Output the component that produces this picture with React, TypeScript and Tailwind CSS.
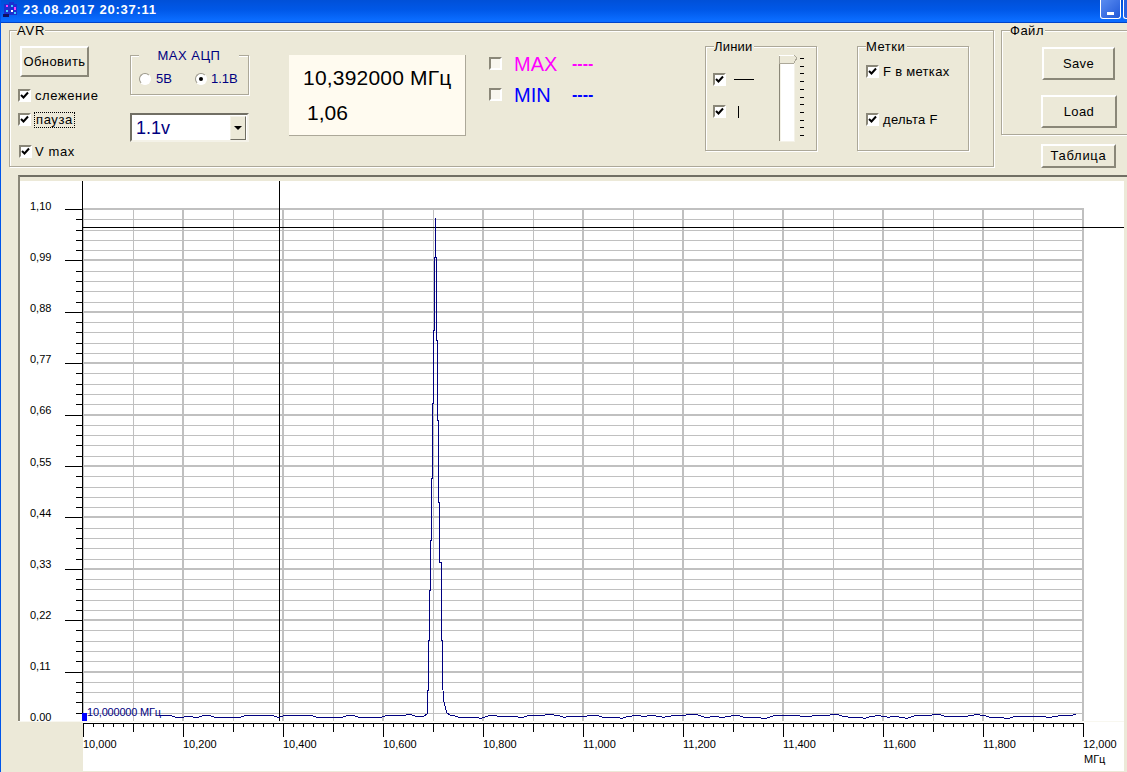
import type { ReactNode } from "react";

/* ── chart data ─────────────────────────────────────── */
const yLabels = ["1,10", "0,99", "0,88", "0,77", "0,66", "0,55", "0,44", "0,33", "0,22", "0,11", "0,00"];
const xLabels = ["10,000", "10,200", "10,400", "10,600", "10,800", "11,000", "11,200", "11,400", "11,600", "11,800", "12,000"];
const GRID_TOP = 209;
const GRID_STEP = 10.28;

const noise = (x: number) =>
  716 - Math.round(Math.sin(x * 0.13) * 0.9 + Math.sin(x * 0.047 + 1) * 0.8 + Math.sin(x * 0.31) * 0.6);

const range = (from: number, to: number, step: number) => {
  const out: number[] = [];
  for (let v = from; v <= to; v += step) out.push(v);
  return out;
};

const peak: [number, number][] = [
  [427, 714], [427.5, 713], [427.5, 690], [428.5, 690], [428.5, 640], [429.5, 640], [429.5, 590], [430.5, 590],
  [430.5, 540], [431.5, 540], [431.5, 478], [432.5, 478], [432.5, 403], [433.5, 403], [433.5, 330], [434.5, 330],
  [434.5, 257], [435.5, 257], [435.5, 218], [435.5, 257], [436.5, 257], [436.5, 340], [437.5, 340], [437.5, 420],
  [438.5, 420], [438.5, 502], [439.5, 502], [439.5, 562], [441.5, 562], [441.5, 640], [442.5, 640], [442.5, 680],
  [443.5, 700], [445, 706], [447, 713], [450, 715],
];

const spectrum = [
  ...range(160, 425, 3).map((x) => [x, noise(x)]),
  ...peak,
  ...range(452, 1078, 3).map((x) => [x, noise(x)]),
]
  .map((p) => p.join(","))
  .join(" ");

/* ── small win32 controls ───────────────────────────── */
function Check({ className = "" }: { className?: string }) {
  return (
    <span className={`flex h-[13px] w-[13px] shrink-0 border-2 border-t-[#8a8778] border-l-[#8a8778] border-r-white border-b-white bg-white ${className}`}>
      <svg viewBox="0 0 9 9" className="h-[9px] w-[9px]">
        <path d="M1 4 L3.5 6.5 L8 1.5" fill="none" stroke="#000" strokeWidth="2" />
      </svg>
    </span>
  );
}

function EmptyCheck() {
  return <span className="block h-[13px] w-[13px] shrink-0 border-2 border-t-[#8a8778] border-l-[#8a8778] border-r-white border-b-white bg-[#f8f6ee]" />;
}

function Radio({ on }: { on?: boolean }) {
  return (
    <span className="flex h-[12px] w-[12px] shrink-0 items-center justify-center rounded-full border border-t-[#9a978a] border-l-[#9a978a] border-r-white border-b-white bg-white">
      {on && <span className="h-[4px] w-[4px] rounded-full bg-black" />}
    </span>
  );
}

function Button({ children, className = "" }: { children: ReactNode; className?: string }) {
  return (
    <div className={`flex items-center justify-center border-2 border-t-white border-l-white border-r-[#8a8778] border-b-[#8a8778] text-[13px] text-black ${className}`}>
      {children}
    </div>
  );
}

function Group({ title, className = "", titleClass = "", children }: { title: string; className?: string; titleClass?: string; children?: ReactNode }) {
  return (
    <div className={`relative shrink-0 border border-[#aca899] shadow-[1px_1px_0_#fff,inset_1px_1px_0_#fff] ${className}`}>
      <span className={`absolute -top-[8px] bg-[#ece9d8] text-[13px] leading-[15px] ${titleClass}`}>{title}</span>
      {children}
    </div>
  );
}

function CheckRow({ label, className = "" }: { label: ReactNode; className?: string }) {
  return (
    <div className={`flex h-[13px] items-center ${className}`}>
      <Check />
      {label}
    </div>
  );
}

/* ── title bar ──────────────────────────────────────── */
function TitleBar() {
  return (
    <div className="flex h-[23px] shrink-0 items-start border-b border-[#0043c8] bg-[linear-gradient(to_bottom,#0050d8,#0058e8_45%,#0a6cff_90%)]">
      <svg viewBox="0 0 14 14" className="ml-[2px] mt-[2px] h-[15px] w-[15px]" shapeRendering="crispEdges">
        <rect x="1" y="2" width="12" height="10" fill="#1c2fd0" />
        <rect x="6" y="0" width="4" height="3" fill="#1c2fd0" />
        <rect x="3" y="3" width="2" height="2" fill="#ff40ff" />
        <rect x="7" y="3" width="2" height="2" fill="#40d0ff" />
        <rect x="10" y="5" width="2" height="2" fill="#ff40ff" />
        <rect x="3" y="7" width="2" height="2" fill="#40d0ff" />
        <rect x="7" y="7" width="2" height="2" fill="#ffffff" />
        <rect x="10" y="9" width="2" height="2" fill="#40d0ff" />
        <rect x="0" y="11" width="6" height="3" fill="#101060" />
      </svg>
      <span className="ml-[5px] mt-[2px] text-[13px] font-bold leading-[16px] tracking-[0.72px] text-white">23.08.2017 20:37:11</span>
      <div className="ml-auto flex h-[19px] w-[21px] items-end justify-center rounded-b-[3px] border border-t-0 border-white bg-[linear-gradient(135deg,#5a8cf0,#2058d8)] pb-[3px]">
        <span className="h-[3px] w-[7px] bg-white" />
      </div>
      <div className="ml-[2px] h-[19px] w-[4px] rounded-bl-[3px] border-b border-l border-white bg-[#2a62e0]" />
    </div>
  );
}

/* ── toolbar ────────────────────────────────────────── */
function AvrColumn() {
  return (
    <div className="ml-[8px] mt-[15px] w-[112px] shrink-0 text-[13px] tracking-[0.6px]">
      <Button className="ml-[2px] h-[31px] w-[69px] tracking-[0.4px]">Обновить</Button>
      <CheckRow className="mt-[12px]" label={<span className="ml-[4px]">слежение</span>} />
      <CheckRow
        className="mt-[11px]"
        label={<span className="ml-[3px] border border-dotted border-black px-px leading-[14px]">пауза</span>}
      />
      <CheckRow className="ml-px mt-[19px]" label={<span className="ml-[3px]">V max</span>} />
    </div>
  );
}

function AdcColumn() {
  return (
    <div className="mt-[24px] w-[119px] shrink-0 text-[#000080]">
      <Group title="MAX АЦП" className="h-[40px] w-[119px]" titleClass="left-[8px] w-[100px] text-center tracking-[0.5px]">
        <div className="ml-[8px] mt-[16px] flex items-center text-[13px] leading-[14px]">
          <Radio />
          <span className="ml-[5px] w-[39px]">5В</span>
          <Radio on />
          <span className="ml-[4px]">1.1В</span>
        </div>
      </Group>
      <div className="mt-[18px] flex h-[29px] w-[119px] items-center justify-between border-2 border-t-[#716f64] border-l-[#716f64] border-r-[#f4f2e8] border-b-[#f4f2e8] bg-white pl-[4px] pr-px">
        <span className="text-[18px] leading-none">1.1v</span>
        <span className="flex h-[24px] w-[16px] items-center justify-center border border-t-[#f4f2e8] border-l-[#f4f2e8] border-r-[#716f64] border-b-[#716f64] bg-[#ece9d8]">
          <span className="h-0 w-0 border-x-[4px] border-t-[4px] border-x-transparent border-t-black" />
        </span>
      </div>
    </div>
  );
}

function Readout() {
  return (
    <div className="ml-[40px] mt-[24px] h-[81px] w-[177px] shrink-0 border-b border-r border-[#aca899] bg-[#fffbf0] text-black">
      <div className="ml-[14px] mt-[11px] text-[21px] leading-[23px] tracking-[0.2px]">10,392000 МГц</div>
      <div className="ml-[18px] mt-[12px] text-[21px] leading-[23px]">1,06</div>
    </div>
  );
}

function MinMax() {
  return (
    <div className="ml-[23px] mt-[26px] w-[105px] shrink-0 text-[20px]">
      <div className="flex h-[13px] items-center text-[#ff00ff]">
        <EmptyCheck />
        <span className="ml-[12px] w-[58px] leading-none">MAX</span>
        <span className="text-[16px] font-bold leading-none">----</span>
      </div>
      <div className="mt-[18px] flex h-[13px] items-center text-[#0000ff]">
        <EmptyCheck />
        <span className="ml-[12px] w-[58px] leading-none">MIN</span>
        <span className="text-[16px] font-bold leading-none">----</span>
      </div>
    </div>
  );
}

function Slider() {
  return (
    <svg viewBox="0 0 27 88" className="h-[88px] w-[27px]" shapeRendering="crispEdges">
      <rect x="2" y="9" width="14" height="78" fill="#fff" stroke="#f4f2e8" />
      <path d="M1 9 H2 V87 H1 Z" fill="#8a8778" />
      <path d="M1 1 H16 L19 4 L16 9 H1 Z" fill="#ece9d8" stroke="#aca899" strokeWidth="1" />
      <path d="M1 1 H16" stroke="#fff" />
      {range(4, 82, 7.7).map((y) => (
        <rect key={y} x="22" y={y} width="4" height="1" fill="#000" />
      ))}
    </svg>
  );
}

function LinesGroup() {
  return (
    <Group title="Линии" className="ml-[111px] mt-[15px] h-[105px] w-[112px]" titleClass="left-[8px] pr-[1px] tracking-[0.2px]">
      <div className="flex">
        <div className="ml-[7px] mt-[26px] w-[65px] shrink-0">
          <CheckRow label={<span className="ml-[8px] h-px w-[20px] bg-black" />} />
          <CheckRow className="mt-[19px]" label={<span className="ml-[12px] h-[12px] w-px bg-black" />} />
        </div>
        <div className="mt-[7px]">
          <Slider />
        </div>
      </div>
    </Group>
  );
}

function MarksGroup() {
  return (
    <Group title="Метки" className="ml-[40px] mt-[15px] h-[105px] w-[112px]" titleClass="left-[8px] pr-[2px] tracking-[0.5px]">
      <div className="ml-[8px] mt-[18px] text-[13px] tracking-[0.3px] text-black">
        <CheckRow label={<span className="ml-[4px]">F в метках</span>} />
        <CheckRow className="mt-[35px]" label={<span className="ml-[4px]">дельта F</span>} />
      </div>
    </Group>
  );
}

function Toolbar() {
  return (
    <div className="flex h-[152px] shrink-0 pl-[8px] pt-[7px] text-black">
      <div className="relative flex h-[137px] w-[985px] shrink-0 items-start border border-[#aca899] shadow-[1px_1px_0_#fff,inset_1px_1px_0_#fff]">
        <span className="absolute -top-[8px] left-[7px] bg-[#ece9d8] text-[13px] leading-[15px] tracking-[0.8px]">AVR</span>
        <AvrColumn />
        <AdcColumn />
        <Readout />
        <MinMax />
        <LinesGroup />
        <MarksGroup />
      </div>
      <div className="ml-[7px] shrink-0">
        <Group title="Файл" className="h-[105px] w-[160px]" titleClass="left-[8px] pr-[1px] tracking-[0.5px]">
          <Button className="ml-[40px] mt-[16px] h-[33px] w-[73px] tracking-[0.4px]">Save</Button>
          <Button className="ml-[39px] mt-[15px] h-[33px] w-[76px] tracking-[0.4px]">Load</Button>
        </Group>
        <Button className="ml-[40px] mt-[9px] h-[24px] w-[75px] tracking-[0.7px]">Таблица</Button>
      </div>
    </div>
  );
}

/* ── chart ──────────────────────────────────────────── */
function Plot() {
  return (
    <svg viewBox="20 181 1104 540" className="block h-[540px] w-[1104px] bg-white text-[11px]">
      <g shapeRendering="crispEdges" stroke="#c0c0c0">
        {range(0, 52, 1).map((i) => (
          <line key={i} x1="83" x2="1084" y1={Math.round(GRID_TOP + i * GRID_STEP)} y2={Math.round(GRID_TOP + i * GRID_STEP)} strokeWidth={i % 5 === 0 ? 2 : 1} />
        ))}
        {range(83, 1083, 50).map((x) => (
          <line key={x} x1={x} x2={x} y1="209" y2="721" strokeWidth={(x - 83) % 100 === 0 ? 2 : 1} />
        ))}
      </g>
      <g shapeRendering="crispEdges" stroke="#000">
        <line x1="82.5" x2="82.5" y1="181" y2="721" />
        <line x1="279.5" x2="279.5" y1="181" y2="721" />
        <line x1="83" x2="1124" y1="227.5" y2="227.5" />
        {range(0, 50, 1).map((i) => (
          <line key={i} x1={i % 5 === 0 ? 65 : 76} x2="82" y1={Math.round(GRID_TOP + i * GRID_STEP) + 0.5} y2={Math.round(GRID_TOP + i * GRID_STEP) + 0.5} />
        ))}
      </g>
      {yLabels.map((label, i) => (
        <text key={label} x="30" y={210 + i * 51.1} fill="#000">
          {label}
        </text>
      ))}
      <polyline points={spectrum} fill="none" stroke="#000080" strokeWidth="1" shapeRendering="crispEdges" />
      <rect x="82" y="713" width="5" height="8" fill="#0000ff" />
      <text x="87" y="716" fill="#000080" textLength="74">
        10,000000 МГц
      </text>
    </svg>
  );
}

function XAxis() {
  return (
    <svg viewBox="83 722 1041 49" className="block h-[49px] w-[1041px] bg-white text-[11px]">
      <g shapeRendering="crispEdges" stroke="#000">
        <line x1="83" x2="1084" y1="723.5" y2="723.5" />
        {range(83, 1083, 10).map((x) => {
          const major = (x - 83) % 100 === 0;
          const mid = (x - 83) % 50 === 0;
          return <line key={x} x1={x + 0.5} x2={x + 0.5} y1="723" y2={major ? 737 : mid ? 732 : 727} />;
        })}
      </g>
      {xLabels.map((label, i) => (
        <text key={label} x={83 + i * 100} y="748" fill="#000">
          {label}
        </text>
      ))}
      <text x="1084" y="763" fill="#000">
        МГц
      </text>
    </svg>
  );
}

export default function App() {
  return (
    <div className="flex h-[772px] w-[1127px] flex-col overflow-hidden border-l border-[#0055ea] bg-[#ece9d8] font-['Liberation_Sans',Arial,sans-serif]">
      <TitleBar />
      <Toolbar />
      <div className="ml-[17px] h-[546px] shrink-0 border-l-2 border-t-2 border-[#8a8778] border-t-[#716f64] pt-[4px]">
        <Plot />
      </div>
      <div className="ml-[17px] h-px w-[1106px] shrink-0 bg-[#f8f7f0]" />
      <div className="ml-[82px]">
        <XAxis />
      </div>
    </div>
  );
}
